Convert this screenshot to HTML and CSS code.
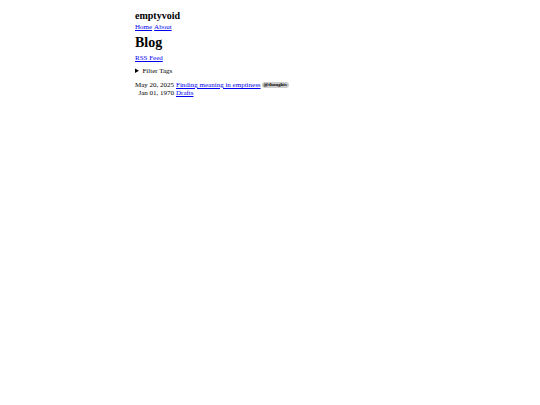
FILE: index.html
```html
<!DOCTYPE html>
<html lang="en">
<head>
    <meta charset="UTF-8">
    <meta name="viewport" content="width=device-width, initial-scale=1.0">
    <title>Blog | emptyvoid</title>
    <link rel="stylesheet" href="styles.css">
</head>
<body>
    <header>
        <h2>emptyvoid</h2>
        <nav>
            <a href="#">Home</a>
            <a href="#">About</a>
        </nav>
    </header>
    <main>
        <h1>Blog</h1>
        <a class="feed" href="#">RSS Feed</a>
        <details>
            <summary>Filter Tags</summary>
            <label><input type="checkbox"> @thoughts</label>
        </details>
        <ul class="posts">
            <li>
                <time datetime="2025-05-20">May 20, 2025</time>
                <a href="#">Finding meaning in emptiness</a>
                <span class="tag">@thoughts</span>
            </li>
            <li>
                <time datetime="1970-01-01">Jan 01, 1970</time>
                <a href="#">Drafts</a>
            </li>
        </ul>
    </main>
</body>
</html>
```
FILE: styles.css
```css
body {
    width: 50%;
    margin: 10px auto;
    font-family: "Liberation Serif", serif;
    font-size: 7px;
    line-height: 8px;
    color: #000;
    background-color: #fff;
}

h1, h2 {
    margin: 0;
}

h1 {
    margin: 4px 0 3px;
    font-size: 14px;
    line-height: 16px;
}

h2 {
    margin-bottom: 2px;
    font-size: 10px;
    line-height: 11px;
}

a {
    color: #0000ee;
}

nav {
    display: flex;
    gap: 2px;
}

.feed {
    display: block;
}

details {
    margin: 5px 0 6px;
}

.posts {
    margin: 0;
    padding: 0;
    list-style: none;
}

.posts li {
    display: flex;
    align-items: center;
}

.posts time {
    width: 39px;
    margin-right: 2px;
    text-align: right;
    white-space: nowrap;
}

.tag {
    margin-left: 1px;
    padding: 0 2px;
    border-radius: 3px;
    font-size: 5px;
    font-weight: bold;
    line-height: 6px;
    background-color: #ccc;
}
```
